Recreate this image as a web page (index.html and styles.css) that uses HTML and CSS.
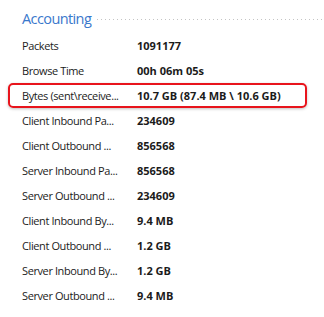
FILE: index.html
```html
<!DOCTYPE html>
<html lang="en">
<head>
  <meta charset="UTF-8" />
  <title>Accounting</title>
  <link rel="stylesheet" href="styles.css">
</head>
<body>
  <section class="group">
    <div class="group-head">
      <h2>Accounting</h2>
      <span class="rule"></span>
    </div>

    <div class="prop"><span class="key">Packets</span><span class="val">1091177</span></div>
    <div class="prop"><span class="key">Browse Time</span><span class="val">00h 06m 05s</span></div>
    <!-- highlighted row -->
    <div class="prop marked"><span class="key" title="Bytes (sent\received)">Bytes (sent\receive...</span><span class="val">10.7 GB (87.4 MB \ 10.6 GB)</span></div>
    <div class="prop"><span class="key" title="Client Inbound Packets">Client Inbound Pa...</span><span class="val">234609</span></div>
    <div class="prop"><span class="key" title="Client Outbound Packets">Client Outbound ...</span><span class="val">856568</span></div>
    <div class="prop"><span class="key" title="Server Inbound Packets">Server Inbound Pa...</span><span class="val">856568</span></div>
    <div class="prop"><span class="key" title="Server Outbound Packets">Server Outbound ...</span><span class="val">234609</span></div>
    <div class="prop"><span class="key" title="Client Inbound Bytes">Client Inbound By...</span><span class="val">9.4 MB</span></div>
    <div class="prop"><span class="key" title="Client Outbound Bytes">Client Outbound ...</span><span class="val">1.2 GB</span></div>
    <div class="prop"><span class="key" title="Server Inbound Bytes">Server Inbound By...</span><span class="val">1.2 GB</span></div>
    <div class="prop"><span class="key" title="Server Outbound Bytes">Server Outbound ...</span><span class="val">9.4 MB</span></div>
  </section>
</body>
</html>
```

FILE: styles.css
```css
* {
  box-sizing: border-box;
  margin: 0;
  padding: 0;
}
body {
  font-family: 'Open Sans', 'Noto Sans', sans-serif;
  background: #fff;
  color: #1b1b1b;
  font-size: 11px;
}
.group {
  padding: 0 17px 0 8px;
}
.group-head {
  display: flex;
  align-items: flex-start;
  height: 33px;
  padding: 9px 0 0 14px;
  gap: 6px;
}
.group-head h2 {
  font-size: 14.5px;
  font-weight: normal;
  letter-spacing: -0.6px;
  color: #3a78cc;
  line-height: 20px;
}
.rule {
  flex: 1;
  height: 1px;
  margin-top: 10px;
  margin-right: -17px;
  background-image: linear-gradient(to right, #c4c4c4 1px, transparent 1px);
  background-size: 4px 1px;
}
.prop {
  display: grid;
  grid-template-columns: 115px 1fr;
  align-items: center;
  height: 25px;
  padding-left: 14px;
}
.key {
  white-space: nowrap;
  letter-spacing: -0.4px;
}
.val {
  font-weight: bold;
  white-space: nowrap;
}
.marked {
  border: 2px solid #e8141c;
  border-radius: 5px;
  padding-left: 12px;
  box-shadow: 0 1px 3px rgba(0,0,0,0.25);
}
```
